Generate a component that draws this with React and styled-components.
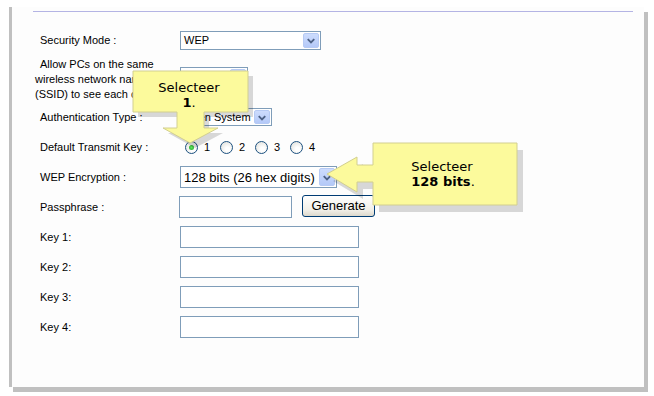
import React from "react";
import styled, { createGlobalStyle } from "styled-components";

const GlobalStyle = createGlobalStyle`
  html, body {
    margin: 0;
    padding: 0;
    background: #ffffff;
  }
`;

function Chevron() {
  return (
    <svg width="15" height="15" viewBox="0 0 15 15">
      <polyline
        points="4,6 7.5,9.5 11,6"
        fill="none"
        stroke="#4d6185"
        strokeWidth="2"
      />
    </svg>
  );
}

function Select({ value, width, height, size }) {
  return (
    <SelectBox $w={width} $h={height} $size={size}>
      <span>{value}</span>
      <ArrowBtn $h={height}>
        <Chevron />
      </ArrowBtn>
    </SelectBox>
  );
}

function App() {
  return (
    <>
      <GlobalStyle />
      <Page>
        <Panel>
          <Divider />
          <Form>
            <Row $h={30}>
              <Label>Security Mode :</Label>
              <Cell>
                <Select value="WEP" width={141} height={19} />
              </Cell>
            </Row>
            <Row $h={48}>
              <WrapLabel>
                Allow PCs on the same
                <br />
                wireless network name
                <br />
                (SSID) to see each other
              </WrapLabel>
              <Cell $top={12}>
                {/* value hidden under the callout */}
                <Select value="" width={68} height={19} />
              </Cell>
            </Row>
            <Row $h={28}>
              <Label>Authentication Type :</Label>
              <Cell>
                <Select value="Open System" width={92} height={18} />
              </Cell>
            </Row>
            <Row $h={32}>
              <Label>Default Transmit Key :</Label>
              <Radios>
                {["1", "2", "3", "4"].map((k, i) => (
                  <RadioItem key={k}>
                    <RadioDot $on={i === 0} />
                    <span>{k}</span>
                  </RadioItem>
                ))}
              </Radios>
            </Row>
            <Row $h={28}>
              <Label>WEP Encryption :</Label>
              <Cell>
                <Select
                  value="128 bits (26 hex digits)"
                  width={157}
                  height={22}
                  size={13}
                />
              </Cell>
            </Row>
            <Row $h={31}>
              <Label>Passphrase :</Label>
              <Cell>
                <TextBox $w={113} $shift={-1} />
                <Button>Generate</Button>
              </Cell>
            </Row>
            {["Key 1:", "Key 2:", "Key 3:", "Key 4:"].map((k) => (
              <Row $h={30} key={k}>
                <Label>{k}</Label>
                <Cell>
                  <TextBox $w={179} />
                </Cell>
              </Row>
            ))}
          </Form>
        </Panel>

        <Overlay width="654" height="396" viewBox="0 0 654 396">
          <g>
            <path
              transform="translate(5,5)"
              d="M133,71 H248 V112 H204 V128 H218 L190,143 L163,128 H177 V112 H133 Z"
              fill="rgba(0,0,0,0.15)"
            />
            <path
              d="M133,71 H248 V112 H204 V128 H218 L190,143 L163,128 H177 V112 H133 Z"
              fill="#fcfa9c"
              stroke="#d2cf90"
              strokeWidth="1"
            />
            <CalloutText x="189" y="92">
              Selecteer
            </CalloutText>
            <CalloutText x="189" y="107">
              <tspan fontWeight="bold">1</tspan>.
            </CalloutText>
          </g>
          <g>
            <path
              transform="translate(6,7)"
              d="M373,143 H517 V205 H373 V182 H357 V192 L327,174 L357,157 V165 H373 Z"
              fill="rgba(0,0,0,0.15)"
            />
            <path
              d="M373,143 H517 V205 H373 V182 H357 V192 L327,174 L357,157 V165 H373 Z"
              fill="#fcfa9c"
              stroke="#d2cf90"
              strokeWidth="1"
            />
            <CalloutText x="442" y="171">
              Selecteer
            </CalloutText>
            <CalloutText x="443" y="186">
              <tspan fontWeight="bold">128 bits</tspan>.
            </CalloutText>
          </g>
        </Overlay>
      </Page>
    </>
  );
}

export default App;

const Page = styled.div`
  position: relative;
  width: 654px;
  height: 396px;
  overflow: hidden;
  box-sizing: border-box;
  padding: 7px 0 0 9px;
  background: #ffffff;
  font-family: "Liberation Sans", Arial, sans-serif;
`;

const Panel = styled.div`
  width: 635px;
  height: 380px;
  box-sizing: border-box;
  background: #fdfdfd;
  border-left: 3px solid #c0c0c0;
  box-shadow: 4px 5px 0 #c0c0c0;
  padding-top: 4px;
`;

const Divider = styled.div`
  height: 1px;
  background: #b4b4e4;
  margin: 0 11px 0 21px;
`;

const Form = styled.div`
  padding: 13px 0 0 28px;
`;

const Row = styled.div`
  display: grid;
  grid-template-columns: 140px 1fr;
  align-items: center;
  height: ${(p) => p.$h}px;
`;

const Label = styled.div`
  font-size: 11px;
  color: #000;
  white-space: nowrap;
`;

const WrapLabel = styled(Label)`
  margin-left: -5px;
  line-height: 15px;
  text-indent: 5px;
`;

const Cell = styled.div`
  display: flex;
  align-items: center;
  align-self: ${(p) => (p.$top ? "start" : "center")};
  margin-top: ${(p) => p.$top || 0}px;
`;

const SelectBox = styled.div`
  box-sizing: border-box;
  width: ${(p) => p.$w}px;
  height: ${(p) => p.$h}px;
  border: 1px solid #7f9db9;
  background: #fff;
  display: flex;
  align-items: center;
  justify-content: space-between;
  padding: 0 1px 0 3px;
  font-size: ${(p) => p.$size || 11}px;
  color: #000;
  white-space: nowrap;
  overflow: hidden;
`;

const ArrowBtn = styled.div`
  box-sizing: border-box;
  width: 16px;
  height: ${(p) => p.$h - 4}px;
  border: 1px solid #b6caf4;
  border-radius: 2px;
  background: linear-gradient(#cddcfd, #b4c9f8);
  display: flex;
  align-items: center;
  justify-content: center;
  flex-shrink: 0;
`;

const Radios = styled.div`
  display: flex;
  align-items: center;
  margin-left: 5px;
`;

const RadioItem = styled.div`
  width: 35px;
  display: flex;
  align-items: center;
  gap: 6px;
  font-size: 11px;
  color: #000;
`;

const RadioDot = styled.div`
  box-sizing: border-box;
  width: 13px;
  height: 13px;
  border-radius: 50%;
  border: 1px solid #1c5180;
  background: radial-gradient(circle at 60% 65%, #ffffff 20%, #dcdcd6 100%);
  position: relative;
  &::after {
    content: "";
    display: ${(p) => (p.$on ? "block" : "none")};
    position: absolute;
    left: 3px;
    top: 3px;
    width: 5px;
    height: 5px;
    border-radius: 50%;
    background: radial-gradient(circle, #5fe35f 0%, #1fa21f 100%);
  }
`;

const TextBox = styled.div`
  box-sizing: border-box;
  width: ${(p) => p.$w}px;
  height: 22px;
  margin-left: ${(p) => p.$shift || 0}px;
  border: 1px solid #7f9db9;
  background: #fff;
`;

const Button = styled.div`
  box-sizing: border-box;
  width: 73px;
  height: 22px;
  margin: -2px 0 0 10px;
  border: 1px solid #003c74;
  border-radius: 3px;
  background: linear-gradient(#ffffff, #f1efe8 70%, #dcd8cc);
  display: flex;
  align-items: center;
  justify-content: center;
  font-size: 13px;
  color: #000;
`;

const Overlay = styled.svg`
  position: absolute;
  left: 0;
  top: 0;
  pointer-events: none;
`;

const CalloutText = styled.text`
  font-family: "DejaVu Sans", Verdana, sans-serif;
  font-size: 13px;
  fill: #000;
  text-anchor: middle;
`;
